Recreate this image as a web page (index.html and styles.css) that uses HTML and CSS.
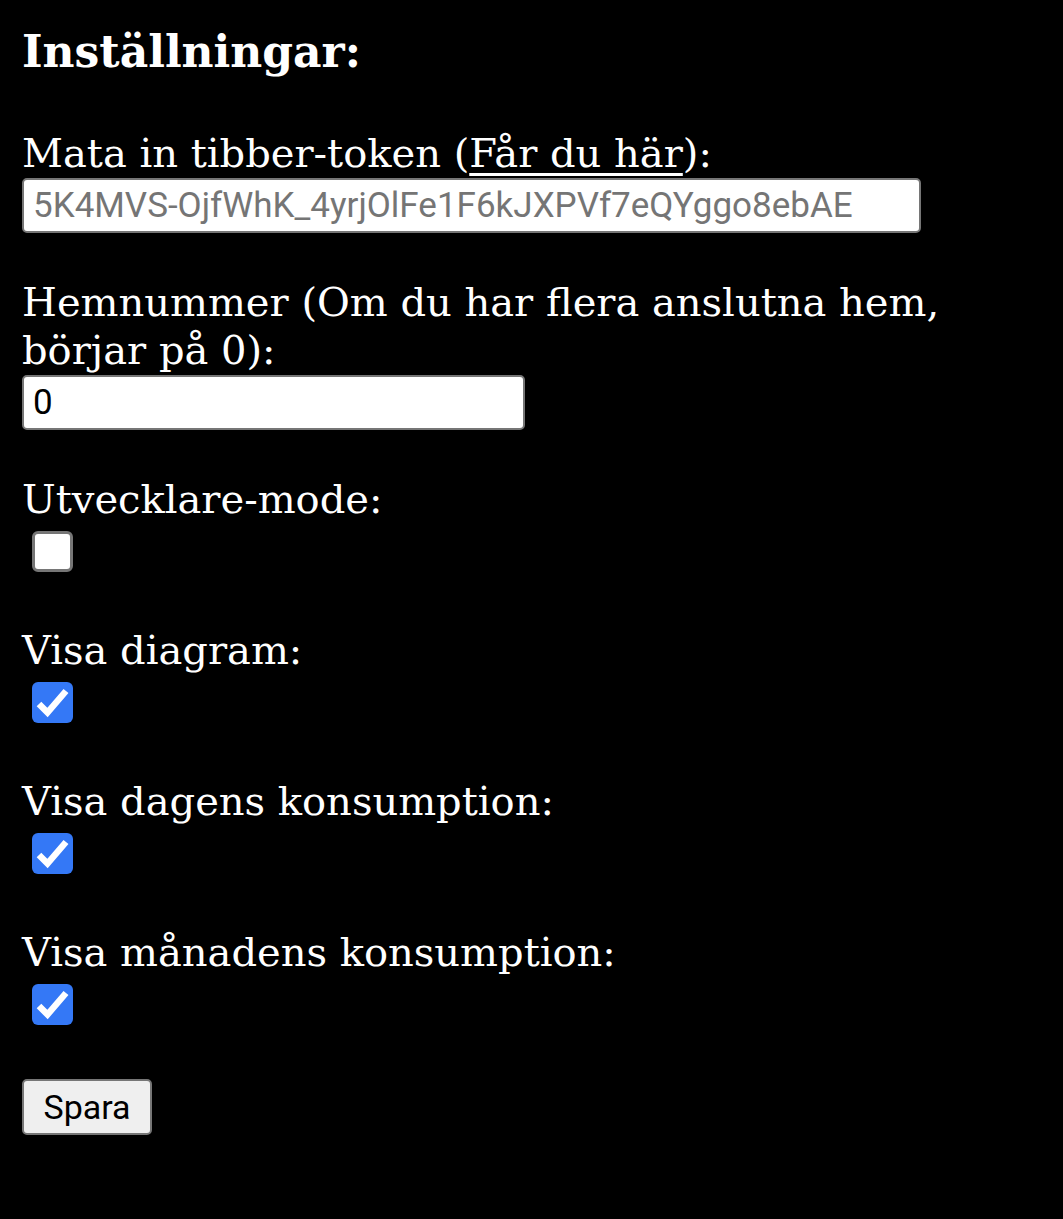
FILE: index.html
```html
<!DOCTYPE html>
<html lang="sv">
<head>
<meta charset="utf-8">
<title>Inställningar</title>
<link rel="stylesheet" href="styles.css">
</head>
<body>
<form class="settings">
  <h2 class="title">Inställningar:</h2>
  <div class="field">
    <label class="label" for="token">Mata in tibber-token (<a class="link" href="#">Får du här</a>):</label>
    <input class="text-input wide" id="token" type="text" placeholder="5K4MVS-OjfWhK_4yrjOlFe1F6kJXPVf7eQYggo8ebAE">
  </div>
  <div class="field">
    <label class="label" for="home">Hemnummer (Om du har flera anslutna hem, börjar på 0):</label>
    <input class="text-input narrow" id="home" type="text" value="0">
  </div>
  <div class="field check-field">
    <label class="label" for="dev">Utvecklare-mode:</label>
    <span class="box"></span>
  </div>
  <div class="field check-field">
    <label class="label" for="diag">Visa diagram:</label>
    <span class="box checked"><svg viewBox="0 0 41 41" class="tick"><path d="M7 22 L15.5 30.5 L34 9" /></svg></span>
  </div>
  <div class="field check-field">
    <label class="label" for="day">Visa dagens konsumption:</label>
    <span class="box checked"><svg viewBox="0 0 41 41" class="tick"><path d="M7 22 L15.5 30.5 L34 9" /></svg></span>
  </div>
  <div class="field check-field">
    <label class="label" for="month">Visa månadens konsumption:</label>
    <span class="box checked"><svg viewBox="0 0 41 41" class="tick"><path d="M7 22 L15.5 30.5 L34 9" /></svg></span>
  </div>
  <button class="save" type="button">Spara</button>
</form>
</body>
</html>
```
FILE: styles.css
```css
html, body {
  margin: 0;
  background: #000;
}
body {
  color: #fff;
  font-family: "DejaVu Serif", serif;
}
.settings {
  display: flex;
  flex-direction: column;
  align-items: flex-start;
  padding: 24px 21px 0 22px;
}
.title {
  margin: 0 0 49px;
  font-size: 44px;
  line-height: 56px;
  font-weight: bold;
}
.field {
  display: flex;
  flex-direction: column;
  align-items: flex-start;
  margin-bottom: 45px;
}
.check-field {
  margin-bottom: 54px;
}
.label {
  font-size: 40px;
  line-height: 48px;
  margin-bottom: 1px;
}
.link {
  color: #fff;
  text-decoration: underline;
  text-decoration-thickness: 3px;
  text-underline-offset: 6px;
}
.text-input {
  box-sizing: border-box;
  height: 55px;
  border: 2px solid #767676;
  border-radius: 5px;
  background: #fff;
  padding: 0 9px;
  font-family: Roboto, sans-serif;
  font-size: 35px;
  color: #000;
  outline: none;
}
.text-input::placeholder {
  color: #757575;
}
.wide { width: 899px; }
.narrow { width: 503px; }
.box {
  box-sizing: border-box;
  width: 41px;
  height: 41px;
  margin: 7px 0 0 10px;
  border: 3px solid #767676;
  border-radius: 6px;
  background: #fff;
  display: block;
}
.box.checked {
  border: none;
  background: #3478f6;
}
.tick {
  display: block;
  width: 41px;
  height: 41px;
  fill: none;
  stroke: #fff;
  stroke-width: 6.5;
  stroke-linecap: butt;
}
.save {
  box-sizing: border-box;
  width: 130px;
  height: 56px;
  background: #efefef;
  border: 2px solid #767676;
  border-radius: 5px;
  font-family: Roboto, sans-serif;
  font-size: 34px;
  color: #000;
  padding: 0;
  margin-top: 0;
}
```
